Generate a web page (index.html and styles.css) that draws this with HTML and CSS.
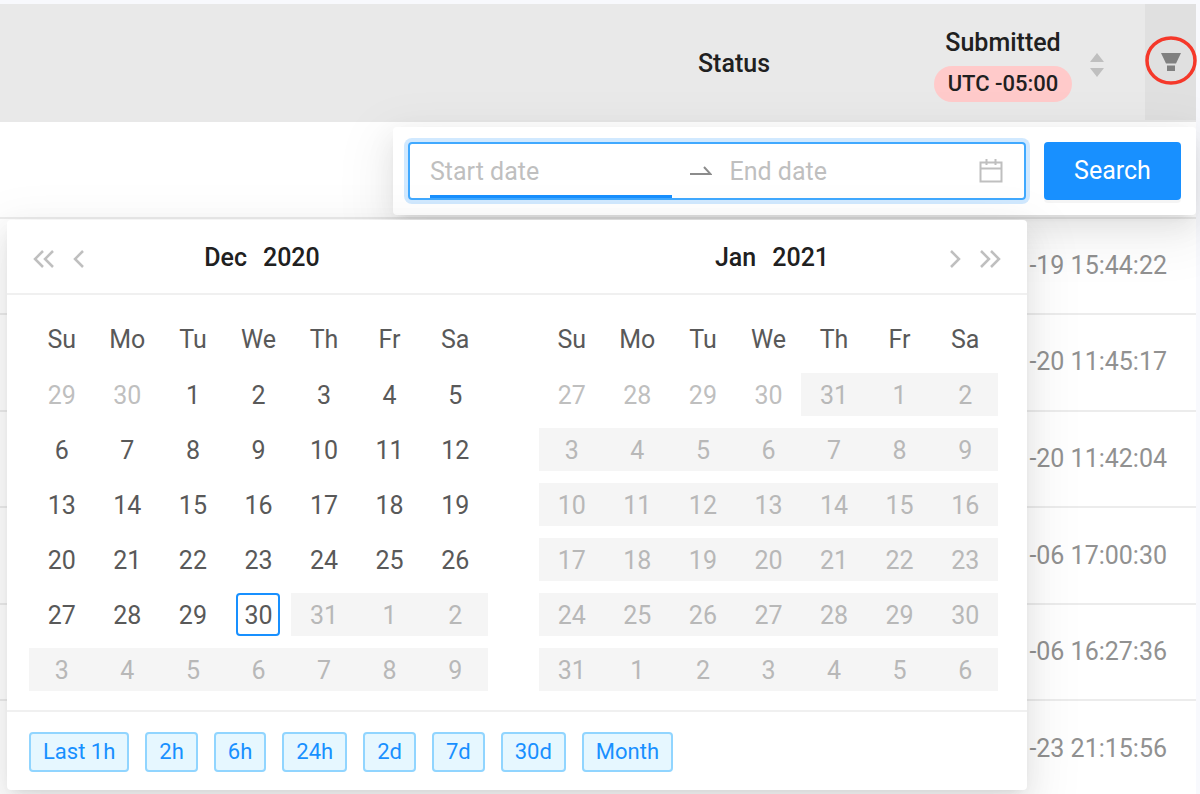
FILE: index.html
```html
<!DOCTYPE html>
<html lang="en">
    <head>
        <meta charset="utf-8">
        <title>Submissions</title>

        <link rel="stylesheet" href="styles.css">
    </head>
    <body>

        <table class="list">
            <colgroup>
                <col>
                <col class="col-status">
                <col class="col-submitted">
                <col class="col-filter">
            </colgroup>
            <thead>
                <tr>
                    <th></th>
                    <th>Status</th>
                    <th>
                        <div class="sortable">
                            <div class="sortable-title">
                                <span>Submitted</span>
                                <span class="timezone">UTC -05:00</span>
                            </div>
                            <svg class="sorter" width="14" height="24" viewBox="0 0 14 24">
                                <path d="M7 0l7 9H0zM7 24l7-9H0z" fill="#bfbfbf"/>
                            </svg>
                        </div>
                    </th>
                    <th class="filter-cell">
                        <button class="filter-button" aria-label="Filter">
                            <svg width="20" height="19" viewBox="0 0 20 19">
                                <path d="M0 0h20l-5 10.500H5zM6 12.500h8V18H6z" fill="#808080"/>
                            </svg>
                        </button>
                        <svg class="filter-mark" viewBox="0 0 52 49">
                            <ellipse cx="26" cy="24.500" rx="24" ry="22.500" fill="none" stroke="#f5382a" stroke-width="3.500"/>
                        </svg>
                    </th>
                </tr>
            </thead>
            <tbody>
                <tr><td></td><td></td><td colspan="2"></td></tr>
                <tr><td></td><td></td><td colspan="2">-19 15:44:22</td></tr>
                <tr><td></td><td></td><td colspan="2">-20 11:45:17</td></tr>
                <tr><td></td><td></td><td colspan="2">-20 11:42:04</td></tr>
                <tr><td></td><td></td><td colspan="2">-06 17:00:30</td></tr>
                <tr><td></td><td></td><td colspan="2">-06 16:27:36</td></tr>
                <tr><td></td><td></td><td colspan="2">-23 21:15:56</td></tr>
            </tbody>
        </table>

        <!-- Filter dropdown -->
        <form class="filter-dropdown">
            <div class="range">
                <input class="range-input active" type="text" placeholder="Start date" aria-label="Start date">
                <svg class="range-arrow" width="22" height="10" viewBox="0 0 22 10">
                    <path d="M0 8h20.500L14 1" fill="none" stroke="#8c8c8c" stroke-width="2"/>
                </svg>
                <input class="range-input" type="text" placeholder="End date" aria-label="End date">
                <svg class="range-icon" width="24" height="24" viewBox="0 0 24 24">
                    <path d="M1.500 3.500h21v19h-21zM1.500 9.500h21M7.500 0v6M16.500 0v6" fill="none" stroke="#bfbfbf" stroke-width="2"/>
                </svg>
            </div>
            <button class="search-button" type="button">Search</button>
        </form>

        <!-- Calendar popup -->
        <div class="picker">
            <div class="months">

                <section class="month">
                    <header class="month-header">
                        <div class="nav">
                            <button aria-label="Previous year">
                                <svg width="22" height="18" viewBox="0 0 22 18"><path d="M10 1L2 9l8 8M20 1l-8 8 8 8"/></svg>
                            </button>
                            <button aria-label="Previous month">
                                <svg width="12" height="18" viewBox="0 0 12 18"><path d="M10 1L2 9l8 8"/></svg>
                            </button>
                        </div>
                        <div class="month-title">
                            <button>Dec</button>
                            <button>2020</button>
                        </div>
                    </header>
                    <table class="days">
                        <thead>
                            <tr><th>Su</th><th>Mo</th><th>Tu</th><th>We</th><th>Th</th><th>Fr</th><th>Sa</th></tr>
                        </thead>
                        <tbody>
                            <tr><td class="other"><span>29</span></td><td class="other"><span>30</span></td><td><span>1</span></td><td><span>2</span></td><td><span>3</span></td><td><span>4</span></td><td><span>5</span></td></tr>
                            <tr><td><span>6</span></td><td><span>7</span></td><td><span>8</span></td><td><span>9</span></td><td><span>10</span></td><td><span>11</span></td><td><span>12</span></td></tr>
                            <tr><td><span>13</span></td><td><span>14</span></td><td><span>15</span></td><td><span>16</span></td><td><span>17</span></td><td><span>18</span></td><td><span>19</span></td></tr>
                            <tr><td><span>20</span></td><td><span>21</span></td><td><span>22</span></td><td><span>23</span></td><td><span>24</span></td><td><span>25</span></td><td><span>26</span></td></tr>
                            <tr><td><span>27</span></td><td><span>28</span></td><td><span>29</span></td><td class="today"><span>30</span></td><td class="disabled"><span>31</span></td><td class="disabled"><span>1</span></td><td class="disabled"><span>2</span></td></tr>
                            <tr class="disabled"><td><span>3</span></td><td><span>4</span></td><td><span>5</span></td><td><span>6</span></td><td><span>7</span></td><td><span>8</span></td><td><span>9</span></td></tr>
                        </tbody>
                    </table>
                </section>

                <section class="month">
                    <header class="month-header">
                        <div class="month-title">
                            <button>Jan</button>
                            <button>2021</button>
                        </div>
                        <div class="nav nav-next">
                            <button aria-label="Next month">
                                <svg width="12" height="18" viewBox="0 0 12 18"><path d="M2 1l8 8-8 8"/></svg>
                            </button>
                            <button aria-label="Next year">
                                <svg width="22" height="18" viewBox="0 0 22 18"><path d="M2 1l8 8-8 8M12 1l8 8-8 8"/></svg>
                            </button>
                        </div>
                    </header>
                    <table class="days">
                        <thead>
                            <tr><th>Su</th><th>Mo</th><th>Tu</th><th>We</th><th>Th</th><th>Fr</th><th>Sa</th></tr>
                        </thead>
                        <tbody>
                            <tr><td class="other"><span>27</span></td><td class="other"><span>28</span></td><td class="other"><span>29</span></td><td class="other"><span>30</span></td><td class="disabled"><span>31</span></td><td class="disabled"><span>1</span></td><td class="disabled"><span>2</span></td></tr>
                            <tr class="disabled"><td><span>3</span></td><td><span>4</span></td><td><span>5</span></td><td><span>6</span></td><td><span>7</span></td><td><span>8</span></td><td><span>9</span></td></tr>
                            <tr class="disabled"><td><span>10</span></td><td><span>11</span></td><td><span>12</span></td><td><span>13</span></td><td><span>14</span></td><td><span>15</span></td><td><span>16</span></td></tr>
                            <tr class="disabled"><td><span>17</span></td><td><span>18</span></td><td><span>19</span></td><td><span>20</span></td><td><span>21</span></td><td><span>22</span></td><td><span>23</span></td></tr>
                            <tr class="disabled"><td><span>24</span></td><td><span>25</span></td><td><span>26</span></td><td><span>27</span></td><td><span>28</span></td><td><span>29</span></td><td><span>30</span></td></tr>
                            <tr class="disabled"><td><span>31</span></td><td><span>1</span></td><td><span>2</span></td><td><span>3</span></td><td><span>4</span></td><td><span>5</span></td><td><span>6</span></td></tr>
                        </tbody>
                    </table>
                </section>

            </div>

            <footer class="presets">
                <button>Last 1h</button>
                <button>2h</button>
                <button>6h</button>
                <button>24h</button>
                <button>2d</button>
                <button>7d</button>
                <button>30d</button>
                <button>Month</button>
            </footer>
        </div>

    </body>
</html>
```
FILE: styles.css
```css
* {
    box-sizing: border-box;
}

body {
    margin: 0;
    padding: 4px 4px 0 0;
    height: 100vh;
    overflow: hidden;
    background: #f8f9fd;
    color: #595959;
    font-family: Roboto, sans-serif;
    font-size: 25px;
    line-height: 30px;
}

button,
input {
    font: inherit;
}

button {
    margin: 0;
    padding: 0;
    border: 0;
    background: none;
    color: inherit;
    cursor: pointer;
}

svg {
    display: block;
}

table {
    width: 100%;
    border-spacing: 0;
    table-layout: fixed;
}

/* List behind the popups */

.list {
    height: 100vh;
    background: white;
}

.col-status {
    width: 318px;
}

.col-submitted {
    width: 252px;
}

.col-filter {
    width: 51px;
}

.list th {
    padding: 3px 0 0;
    height: 118px;
    border-bottom: 2px solid #e8e8e8;
    background: #e9e9e9;
    color: #202020;
    font-weight: 500;
}

.list td {
    padding: 0 29px 0 0;
    height: 96px;
    border-bottom: 2px solid #ececec;
    color: #919191;
    text-align: right;
}

.sortable {
    display: flex;
    justify-content: center;
    align-items: center;
    gap: 18px;
    padding-top: 3px;
}

.sortable-title {
    display: flex;
    flex-direction: column;
    align-items: center;
    gap: 8px;
}

.timezone {
    padding: 0 14px;
    border-radius: 18px;
    background: #ffcaca;
    font-size: 22px;
    line-height: 36px;
}

.list .filter-cell {
    position: relative;
    padding: 0;
    background: #e0e0e0;
}

.filter-button {
    display: block;
    margin: auto;
}

/* red ring drawn over the filter icon */
.filter-mark {
    position: absolute;
    left: 0;
    top: 32px;
    width: 52px;
    height: 49px;
    pointer-events: none;
}

/* Filter dropdown */

.filter-dropdown,
.picker {
    position: absolute;
    border-radius: 4px;
    background: white;
    box-shadow:
        0 5px 11px -7px rgba(0, 0, 0, 0.12),
        0 11px 29px rgba(0, 0, 0, 0.08),
        0 16px 51px 15px rgba(0, 0, 0, 0.05);
}

.filter-dropdown {
    display: flex;
    gap: 18px;
    top: 127px;
    right: 4px;
    width: 803px;
    padding: 15px;
}

.range {
    display: flex;
    flex: 1;
    align-items: center;
    min-width: 0;
    height: 58px;
    padding: 0 21px 0 20px;
    border: 2px solid #40a9ff;
    border-radius: 4px;
    box-shadow: 0 0 0 4px rgba(24, 144, 255, 0.2);
}

.range-input {
    flex: 1;
    min-width: 0;
    height: 54px;
    padding: 0;
    border: 0;
    outline: 0;
    background: none;
}

.range-input::placeholder {
    color: #bfbfbf;
}

.range-input.active {
    box-shadow: inset 0 -3px #1890ff;
}

.range-arrow {
    margin: 0 18px;
}

.range-icon {
    margin-left: 8px;
}

.search-button {
    width: 137px;
    height: 58px;
    border-radius: 4px;
    background: #1890ff;
    color: white;
    box-shadow: 0 3px 0 rgba(0, 0, 0, 0.04);
}

/* Calendar popup */

.picker {
    top: 220px;
    left: 7px;
    width: 1020px;
}

.months {
    display: grid;
    grid-template-columns: 1fr 1fr;
}

.month-header {
    display: grid;
    grid-template-columns: 1fr auto 1fr;
    align-items: center;
    height: 75px;
    padding: 2px 26px 0;
    border-bottom: 2px solid #f0f0f0;
}

.month-title {
    display: flex;
    grid-column: 2;
    gap: 16px;
    color: #202020;
    font-weight: 500;
}

.nav {
    display: flex;
    gap: 18px;
    padding-top: 3px;
}

.nav-next {
    justify-content: flex-end;
}

.nav path {
    fill: none;
    stroke: #bfbfbf;
    stroke-width: 2.500;
}

.days {
    padding: 17px 0 13px;
    width: calc(100% - 51px);
    margin: 0 29px 0 22px;
    text-align: center;
}

.days th {
    padding: 0;
    height: 55px;
    font-weight: 400;
}

.days td {
    padding: 6px 0;
}

.days span {
    display: block;
    height: 43px;
    line-height: 45px;
}

.days .other {
    color: #bfbfbf;
}

.days .disabled span {
    background: #f5f5f5;
    color: #b8b8b8;
}

.days .today span {
    margin: auto;
    width: 44px;
    border: 2px solid #1890ff;
    border-radius: 4px;
    line-height: 41px;
}

.presets {
    display: flex;
    gap: 16px;
    padding: 20px 22px 18px;
    border-top: 2px solid #f0f0f0;
}

.presets button {
    height: 40px;
    padding: 0 12px;
    border: 2px solid #91d5ff;
    border-radius: 4px;
    background: #e6f7ff;
    color: #1890ff;
    font-size: 22px;
}
```
